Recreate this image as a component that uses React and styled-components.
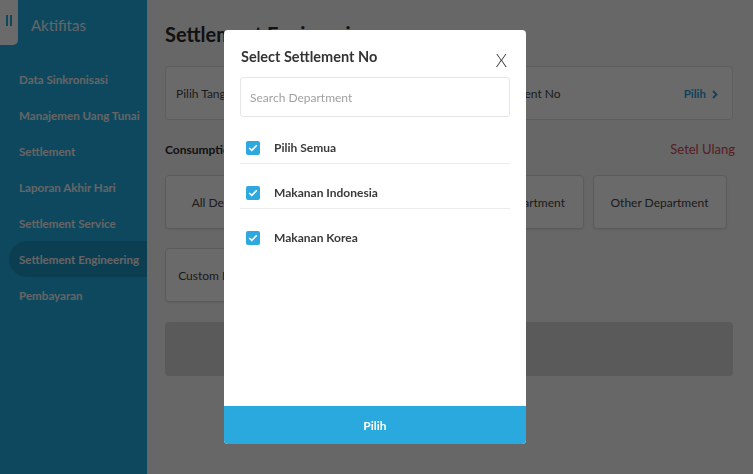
import React from "react";
import styled, { createGlobalStyle } from "styled-components";

const Global = createGlobalStyle`
  html, body { margin: 0; padding: 0; }
  body { font-family: "Lato", "Noto Sans", sans-serif; background: #f7f7f7; }
  * { box-sizing: border-box; }
`;

const Layout = styled.div`
  display: flex;
  width: 753px;
  height: 474px;
  overflow: hidden;
`;

const Sidebar = styled.aside`
  width: 147px;
  flex-shrink: 0;
  background: #23ade3;
  display: flex;
  flex-direction: column;
`;

const SideHead = styled.div`
  display: flex;
  align-items: flex-start;
  height: 61px;
`;

const Toggle = styled.div`
  width: 18px;
  height: 45px;
  background: #ffffff;
  border-bottom-right-radius: 5px;
  display: flex;
  align-items: center;
  justify-content: center;
  gap: 2px;
`;

const Bar = styled.span`
  width: 2px;
  height: 11px;
  background: #23ade3;
  margin-top: -4px;
`;

const SideTitle = styled.div`
  margin-left: 13px;
  margin-top: 16px;
  font-size: 15px;
  color: #ffffff;
  opacity: 0.9;
`;

const Menu = styled.nav`
  display: flex;
  flex-direction: column;
  padding-left: 9px;
`;

const MenuItem = styled.div`
  height: 36px;
  display: flex;
  align-items: center;
  padding-left: 10px;
  font-size: 11.6px;
  font-weight: 700;
  color: #f2f2f2;
  border-radius: 18px 0 0 18px;
  background: ${(p) => (p.$active ? "#1e96c6" : "transparent")};
  white-space: nowrap;
`;

const Main = styled.main`
  flex: 1;
  padding: 20px 20px 0 18px;
  display: flex;
  flex-direction: column;
`;

const PageTitle = styled.h1`
  margin: 0;
  font-size: 20px;
  font-weight: 700;
  color: #2b2b2b;
  line-height: 28px;
`;

const Card = styled.div`
  margin-top: 18px;
  height: 54px;
  background: #fff;
  border: 1px solid #e2e2e2;
  border-radius: 4px;
  display: grid;
  grid-template-columns: 1fr 1fr;
`;

const Picker = styled.div`
  display: flex;
  align-items: center;
  justify-content: space-between;
  padding: 0 13px 0 10px;
  font-size: 12px;
  color: #444;
`;

const PickLink = styled.span`
  color: #2a9fd6;
  font-weight: 700;
  font-size: 11.5px;
`;

const SectionRow = styled.div`
  margin-top: 18px;
  display: flex;
  justify-content: space-between;
  align-items: center;
  height: 22px;
`;

const SectionTitle = styled.div`
  font-size: 12px;
  font-weight: 700;
  color: #2b2b2b;
`;

const Reset = styled.div`
  font-size: 13px;
  color: #d04a58;
  margin-right: -2px;
`;

const DeptGrid = styled.div`
  margin-top: 15px;
  display: grid;
  grid-template-columns: repeat(4, 134px);
  column-gap: 8.5px;
  row-gap: 19px;
`;

const Dept = styled.div`
  height: 54px;
  background: #fff;
  border: 1px solid #dcdcdc;
  border-radius: 4px;
  box-shadow: 0 1px 2px rgba(0, 0, 0, 0.08);
  display: flex;
  align-items: center;
  justify-content: center;
  font-size: 12px;
  color: #444;
`;

const GrayBar = styled.div`
  margin-top: 20px;
  height: 54px;
  background: #d9d9d9;
  border-radius: 4px;
`;

const Overlay = styled.div`
  position: fixed;
  inset: 0;
  background: rgba(0, 0, 0, 0.585);
  display: flex;
  align-items: center;
  justify-content: center;
`;

const Modal = styled.div`
  width: 302px;
  height: 414px;
  background: #fff;
  border-radius: 4px;
  display: flex;
  flex-direction: column;
  overflow: hidden;
  margin-left: -3px;
`;

const ModalBody = styled.div`
  flex: 1;
  padding: 15px 16px 0 16px;
  display: flex;
  flex-direction: column;
`;

const ModalHead = styled.div`
  display: flex;
  justify-content: space-between;
  align-items: center;
  height: 22px;
  margin-left: 1px;
`;

const ModalTitle = styled.div`
  font-size: 14.5px;
  font-weight: 700;
  color: #333;
`;

const Close = styled.div`
  font-size: 18px;
  font-weight: 300;
  color: #333;
  margin-top: 8px;
  margin-right: 3px;
`;

const Search = styled.input`
  margin-top: 10px;
  height: 40px;
  width: 100%;
  border: 1px solid #e6e6e6;
  border-radius: 3px;
  padding: 0 9px;
  font-family: inherit;
  font-size: 12px;
  outline: none;
  &::placeholder { color: #a0a0a0; }
`;

const List = styled.div`
  margin-top: 2px;
  display: flex;
  flex-direction: column;
`;

const Row = styled.label`
  display: flex;
  align-items: center;
  padding: 21px 0 8px 6px;
  border-bottom: ${(p) => (p.$last ? "none" : "1px solid #ececec")};
  font-size: 12px;
  font-weight: 700;
  color: #3a3a3a;
  gap: 14px;
`;

const Check = styled.span`
  width: 14px;
  height: 14px;
  border-radius: 2px;
  background: #2ea9e0;
  display: flex;
  align-items: center;
  justify-content: center;
`;

const Submit = styled.button`
  height: 38px;
  border: none;
  background: #29a9dd;
  color: #fff;
  font-family: inherit;
  font-size: 12px;
  font-weight: 700;
`;

const Chevron = () => (
  <svg width="8" height="9" viewBox="0 0 8 9" style={{ marginLeft: 5, verticalAlign: "-1px" }}>
    <path d="M2 1 L5.5 4.5 L2 8" fill="none" stroke="#2a9fd6" strokeWidth="1.8" />
  </svg>
);

const Tick = () => (
  <svg width="10" height="8" viewBox="0 0 10 8">
    <path d="M1.2 4 L3.8 6.4 L8.8 1.3" fill="none" stroke="#fff" strokeWidth="1.6" />
  </svg>
);

const menu = [
  "Data Sinkronisasi",
  "Manajemen Uang Tunai",
  "Settlement",
  "Laporan Akhir Hari",
  "Settlement Service",
  "Settlement Engineering",
  "Pembayaran",
];

const items = ["Pilih Semua", "Makanan Indonesia", "Makanan Korea"];

export default function App() {
  return (
    <>
      <Global />
      <Layout>
        <Sidebar>
          <SideHead>
            <Toggle>
              <Bar />
              <Bar />
            </Toggle>
            <SideTitle>Aktifitas</SideTitle>
          </SideHead>
          <Menu>
            {menu.map((m) => (
              <MenuItem key={m} $active={m === "Settlement Engineering"}>
                {m}
              </MenuItem>
            ))}
          </Menu>
        </Sidebar>
        <Main>
          <PageTitle>Settlement Engineering</PageTitle>
          <Card>
            <Picker>
              <span>Pilih Tanggal</span>
              <PickLink>
                Pilih
                <Chevron />
              </PickLink>
            </Picker>
            <Picker>
              <span>Pilih Settlement No</span>
              <PickLink>
                Pilih
                <Chevron />
              </PickLink>
            </Picker>
          </Card>
          <SectionRow>
            <SectionTitle>Consumption Department</SectionTitle>
            <Reset>Setel Ulang</Reset>
          </SectionRow>
          <DeptGrid>
            <Dept>All Department</Dept>
            <Dept>Food Department</Dept>
            <Dept>Drink Department</Dept>
            <Dept>Other Department</Dept>
            <Dept>Custom Department</Dept>
          </DeptGrid>
          <GrayBar />
        </Main>
      </Layout>
      <Overlay>
        <Modal>
          <ModalBody>
            <ModalHead>
              <ModalTitle>Select Settlement No</ModalTitle>
              <Close>X</Close>
            </ModalHead>
            <Search placeholder="Search Department" />
            <List>
              {items.map((it, i) => (
                <Row key={it} $last={i === items.length - 1}>
                  <Check>
                    <Tick />
                  </Check>
                  {it}
                </Row>
              ))}
            </List>
          </ModalBody>
          <Submit>Pilih</Submit>
        </Modal>
      </Overlay>
    </>
  );
}
